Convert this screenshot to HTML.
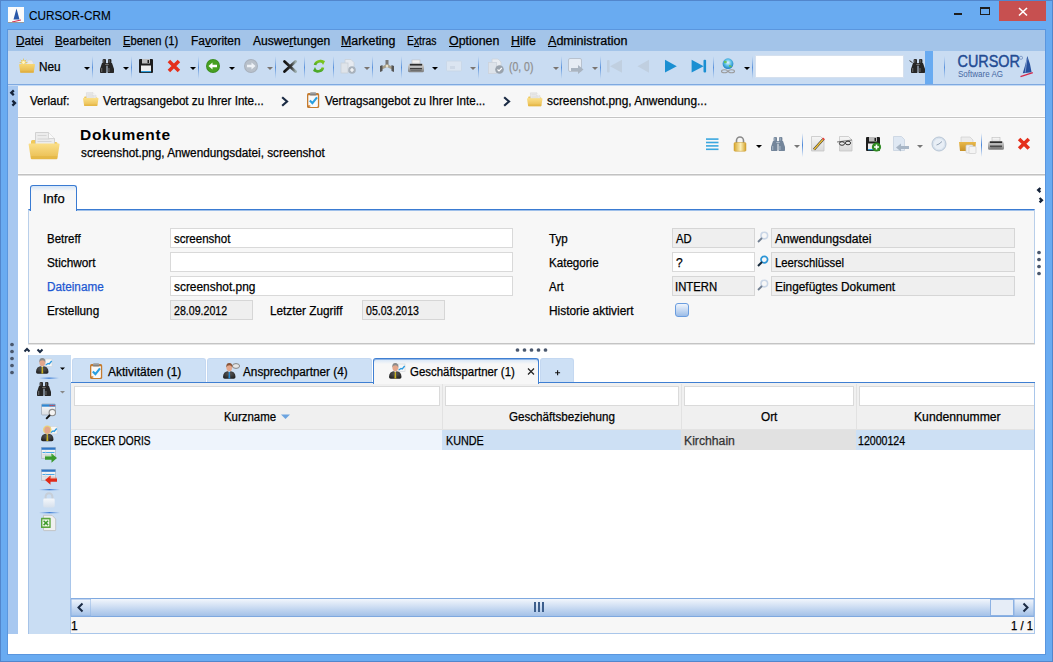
<!DOCTYPE html>
<html><head><meta charset="utf-8">
<style>
*{margin:0;padding:0;box-sizing:border-box}
html,body{width:1053px;height:662px;overflow:hidden}
body{position:relative;background:#69abf1;font-family:"Liberation Sans",sans-serif;font-size:12px;color:#000}
.a{position:absolute}
.t{position:absolute;font-size:12px;line-height:14px;white-space:nowrap;color:#000;-webkit-text-stroke:0.25px currentColor}
.u{text-decoration:underline;text-underline-offset:1px}
.sep{position:absolute;width:1px;background:linear-gradient(#cadcf2,#7ea6d8 30%,#7ea6d8 70%,#cadcf2)}
.dd{position:absolute;width:0;height:0;border-left:3px solid transparent;border-right:3px solid transparent;border-top:3px solid #000}
.ddg{border-top-color:#777}
.fld{position:absolute;height:20px;background:#fff;border:1px solid #d9d9d9}
.fldd{position:absolute;height:20px;background:#efefef;border:1px solid #d6d6d6}
.tab{position:absolute;top:358px;height:24px;background:#cde0f5;border:1px solid #c4d8f1;border-bottom:none;border-radius:3px 3px 0 0}
.flt{position:absolute;top:386px;height:20px;background:#fff;border:1px solid #dadada}
</style></head><body>
<!-- outer dark edge -->
<div class="a" style="left:0;top:0;width:1053px;height:662px;border:1px solid #5286cc"></div>

<!-- title bar -->
<div class="a" style="left:8px;top:7px;width:16px;height:16px;background:#fff"></div>
<div class="t" style="left:29.2px;top:8px;font-size:13px;line-height:16px;color:#000;-webkit-text-stroke:0.1px #000;transform:scaleX(0.9056);transform-origin:0 0">CURSOR-CRM</div>
<div class="a" style="left:999px;top:1px;width:47px;height:20px;background:#c75050"></div>

<!-- client area -->
<div class="a" style="left:7px;top:29px;width:1039px;height:626px;background:#fff;border:1px solid #5a96de"></div>
<!-- menu bar -->
<div class="a" style="left:8px;top:30px;width:1037px;height:21px;background:#a3c4e9"></div>
<div class="t" style="left:15.9px;top:34px;transform:scaleX(0.9800);transform-origin:0 0"><span class="u">D</span>atei</div>
<div class="t" style="left:55.3px;top:34px;transform:scaleX(0.9622);transform-origin:0 0"><span class="u">B</span>earbeiten</div>
<div class="t" style="left:123.1px;top:34px;transform:scaleX(0.9297);transform-origin:0 0"><span class="u">E</span>benen (1)</div>
<div class="t" style="left:191.0px;top:34px;transform:scaleX(0.9909);transform-origin:0 0">Fa<span class="u">v</span>oriten</div>
<div class="t" style="left:252.5px;top:34px;transform:scaleX(1.0073);transform-origin:0 0">Auswe<span class="u">r</span>tungen</div>
<div class="t" style="left:341.0px;top:34px;transform:scaleX(1.0324);transform-origin:0 0"><span class="u">M</span>arketing</div>
<div class="t" style="left:407.3px;top:34px;transform:scaleX(0.8616);transform-origin:0 0">E<span class="u">x</span>tras</div>
<div class="t" style="left:449.2px;top:34px;transform:scaleX(1.0327);transform-origin:0 0"><span class="u">O</span>ptionen</div>
<div class="t" style="left:511.4px;top:34px;transform:scaleX(1.0357);transform-origin:0 0"><span class="u">H</span>ilfe</div>
<div class="t" style="left:547.7px;top:34px;transform:scaleX(1.0457);transform-origin:0 0"><span class="u">A</span>dministration</div>

<!-- toolbar -->
<div class="a" style="left:8px;top:51px;width:1037px;height:34px;background:#c9dcf2;border-bottom:1px solid #7fa9e0"></div>
<div class="t" style="left:39.4px;top:60px;transform:scaleX(0.9841);transform-origin:0 0">Neu</div>
<div class="t" style="left:508.6px;top:60px;color:#8f8f8f;transform:scaleX(0.8711);transform-origin:0 0">(0, 0)</div>
<div class="a" style="left:755px;top:55px;width:149px;height:23px;background:#fff;border:1px solid #d5e0ee"></div>
<div class="a" style="left:925px;top:51px;width:8px;height:33px;background:#69abf1"></div>

<!-- breadcrumb -->
<div class="a" style="left:8px;top:85px;width:10px;height:549px;background:#a8c8f0"></div>
<div class="a" style="left:18px;top:86px;width:1027px;height:32px;background:#f7f7f7;border-bottom:1px solid #c4c4c4;box-shadow:inset 0 -1px 0 #fdfdfd"></div>
<div class="a" style="left:8px;top:85px;width:1037px;height:1px;background:#c4daf4"></div>
<div class="t" style="left:30.3px;top:94px;transform:scaleX(0.9688);transform-origin:0 0">Verlauf:</div>
<div class="t" style="left:103.0px;top:94px;transform:scaleX(0.9721);transform-origin:0 0">Vertragsangebot zu Ihrer Inte...</div>
<div class="t" style="left:325.0px;top:94px;transform:scaleX(0.9691);transform-origin:0 0">Vertragsangebot zu Ihrer Inte...</div>
<div class="t" style="left:547.2px;top:94px;transform:scaleX(0.9909);transform-origin:0 0">screenshot.png, Anwendung...</div>

<!-- header -->
<div class="a" style="left:18px;top:118px;width:1027px;height:57px;background:#f7f7f7;border-bottom:1px solid #c2c2c2;box-shadow:inset 0 1px 0 #fcfcfc,inset 0 -1px 0 #fcfcfc,0 1px 0 #dedede"></div>
<div class="t" style="left:80px;top:126.5px;font-size:15.5px;line-height:16px;font-weight:bold;letter-spacing:0.7px;-webkit-text-stroke:0">Dokumente</div>
<div class="t" style="left:80.5px;top:146px;transform:scaleX(0.9794);transform-origin:0 0">screenshot.png, Anwendungsdatei, screenshot</div>

<!-- info panel -->
<div class="a" style="left:28px;top:209px;width:1007px;height:135px;background:#f7f7f7;border:1px solid #b9cfea;border-top:1px solid #3a7bd2;border-bottom:1px solid #c4c4c4;box-shadow:inset 0 1px 0 #9fc0ea,0 1px 0 #e4e4e4"></div>
<div class="a" style="left:30px;top:185px;width:47px;height:26px;background:linear-gradient(#d3e4f7,#f7f7f7 5px);border:1px solid #3a7bd2;border-bottom:none;border-radius:3px 3px 0 0"></div>
<div class="t" style="left:42.8px;top:192px;transform:scaleX(1.0806);transform-origin:0 0">Info</div>

<div class="t" style="left:47.3px;top:232px;transform:scaleX(0.9553);transform-origin:0 0">Betreff</div>
<div class="t" style="left:47.3px;top:256px;transform:scaleX(0.9837);transform-origin:0 0">Stichwort</div>
<div class="t" style="left:47.3px;top:280px;color:#1d58d2;transform:scaleX(0.9767);transform-origin:0 0">Dateiname</div>
<div class="t" style="left:47.3px;top:304px;transform:scaleX(0.9775);transform-origin:0 0">Erstellung</div>
<div class="fld" style="left:170px;top:228px;width:343px"></div>
<div class="fld" style="left:170px;top:252px;width:343px"></div>
<div class="fld" style="left:170px;top:276px;width:343px"></div>
<div class="fldd" style="left:170px;top:300px;width:83px"></div>
<div class="t" style="left:174.0px;top:232px;transform:scaleX(0.9602);transform-origin:0 0">screenshot</div>
<div class="t" style="left:174.0px;top:280px;transform:scaleX(0.9916);transform-origin:0 0">screenshot.png</div>
<div class="t" style="left:174.0px;top:304px;transform:scaleX(0.8843);transform-origin:0 0">28.09.2012</div>
<div class="t" style="left:269.5px;top:304px;transform:scaleX(0.9815);transform-origin:0 0">Letzter Zugriff</div>
<div class="fldd" style="left:362px;top:300px;width:83px"></div>
<div class="t" style="left:366.0px;top:304px;transform:scaleX(0.8810);transform-origin:0 0">05.03.2013</div>

<div class="t" style="left:549.4px;top:232px;transform:scaleX(0.9660);transform-origin:0 0">Typ</div>
<div class="t" style="left:549.4px;top:256px;transform:scaleX(0.9653);transform-origin:0 0">Kategorie</div>
<div class="t" style="left:549.4px;top:280px;transform:scaleX(0.9563);transform-origin:0 0">Art</div>
<div class="t" style="left:549.4px;top:304px;transform:scaleX(0.9905);transform-origin:0 0">Historie aktiviert</div>
<div class="fldd" style="left:672px;top:228px;width:83px"></div>
<div class="fld" style="left:672px;top:252px;width:83px"></div>
<div class="fldd" style="left:672px;top:276px;width:83px"></div>
<div class="fldd" style="left:771px;top:228px;width:244px"></div>
<div class="fldd" style="left:771px;top:252px;width:244px"></div>
<div class="fldd" style="left:771px;top:276px;width:244px"></div>
<div class="t" style="left:676.0px;top:232px;transform:scaleX(0.9351);transform-origin:0 0">AD</div>
<div class="t" style="left:676px;top:256px">?</div>
<div class="t" style="left:675.0px;top:280px;transform:scaleX(0.9419);transform-origin:0 0">INTERN</div>
<div class="t" style="left:775.1px;top:232px;transform:scaleX(1.0101);transform-origin:0 0">Anwendungsdatei</div>
<div class="t" style="left:775.1px;top:256px;transform:scaleX(0.9408);transform-origin:0 0">Leerschlüssel</div>
<div class="t" style="left:775.1px;top:280px;transform:scaleX(0.9896);transform-origin:0 0">Eingefügtes Dokument</div>
<div class="a" style="left:675px;top:303px;width:14px;height:14px;border:1px solid #6a9ddf;border-radius:3px;background:linear-gradient(#f0f5fc,#9cbde8)"></div>

<!-- sidebar -->
<div class="a" style="left:28px;top:355px;width:43px;height:279px;background:#c9ddf3;border-left:1px solid #a6c3e8"></div>

<!-- tabs -->
<div class="tab" style="left:72px;width:134px"></div>
<div class="tab" style="left:207px;width:165px"></div>
<div class="a" style="left:373px;top:358px;width:166px;height:26px;background:linear-gradient(#d3e4f7,#f7f7f7 5px);border:1px solid #3f7fd2;border-bottom:none;border-radius:3px 3px 0 0;z-index:2;box-shadow:inset 0 1px 0 #8fb5e6"></div>
<div class="tab" style="left:540px;width:34px"></div>
<div class="a" style="left:71px;top:382px;width:303px;height:1px;background:#3f7fd2"></div>
<div class="a" style="left:538px;top:382px;width:497px;height:1px;background:#3f7fd2"></div>
<div class="t" style="left:108px;top:365px">Aktivitäten (1)</div>
<div class="t" style="left:242.7px;top:365px;transform:scaleX(0.9811);transform-origin:0 0">Ansprechpartner (4)</div>
<div class="t" style="left:409.7px;top:365px;z-index:3;transform:scaleX(0.9523);transform-origin:0 0">Geschäftspartner (1)</div>



<!-- grid -->
<div class="a" style="left:70px;top:383px;width:965px;height:251px;background:#fff;border-left:1px solid #a9c6ea;border-right:1px solid #a9c6ea;border-bottom:1px solid #a9c6ea"></div>
<div class="a" style="left:71px;top:383px;width:963px;height:47px;background:#f0f0f0;border-bottom:1px solid #e3e3e3"></div>
<div class="flt" style="left:74px;width:366px"></div>
<div class="flt" style="left:445px;width:234px"></div>
<div class="flt" style="left:684px;width:170px"></div>
<div class="flt" style="left:859px;width:175px;border-right:none"></div>
<div class="a" style="left:442px;top:384px;width:1px;height:45px;background:#e2e2e2"></div>
<div class="a" style="left:681px;top:384px;width:1px;height:45px;background:#e2e2e2"></div>
<div class="a" style="left:856px;top:384px;width:1px;height:45px;background:#e2e2e2"></div>
<div class="t" style="left:224.1px;top:410px;transform:scaleX(0.9524);transform-origin:0 0">Kurzname</div>
<div class="t" style="left:509.3px;top:410px;transform:scaleX(0.9684);transform-origin:0 0">Geschäftsbeziehung</div>
<div class="t" style="left:761.3px;top:410px;transform:scaleX(0.9810);transform-origin:0 0">Ort</div>
<div class="t" style="left:914.3px;top:410px;transform:scaleX(1.0142);transform-origin:0 0">Kundennummer</div>

<div class="a" style="left:71px;top:430px;width:371px;height:20px;background:#eef4fc"></div>
<div class="a" style="left:442px;top:430px;width:239px;height:20px;background:#cde0f4"></div>
<div class="a" style="left:681px;top:430px;width:175px;height:20px;background:#e1e1e1"></div>
<div class="a" style="left:856px;top:430px;width:178px;height:20px;background:#cde0f4"></div>
<div class="t" style="left:74.1px;top:434px;transform:scaleX(0.8447);transform-origin:0 0">BECKER DORIS</div>
<div class="t" style="left:445.5px;top:434px;transform:scaleX(0.9000);transform-origin:0 0">KUNDE</div>
<div class="t" style="left:683.8px;top:434px;color:#333;transform:scaleX(1.0172);transform-origin:0 0">Kirchhain</div>
<div class="t" style="left:858.4px;top:434px;transform:scaleX(0.8824);transform-origin:0 0">12000124</div>

<!-- scrollbar -->
<div class="a" style="left:71px;top:598px;width:963px;height:19px;background:linear-gradient(#eef3fb,#a7c4e9);border-top:1px solid #7ea8df;border-bottom:1px solid #7ea8df"></div>
<!-- status -->
<div class="a" style="left:71px;top:617px;width:963px;height:17px;background:#f7f7f7;border-bottom:1px solid #a9c6ea"></div>
<div class="t" style="left:71px;top:619px">1</div>
<div class="t" style="left:1010.8px;top:619px;transform:scaleX(0.9377);transform-origin:0 0">1 / 1</div>
<svg class="a" style="left:0;top:0;z-index:20" width="1053" height="662" viewBox="0 0 1053 662">
<defs>
<linearGradient id="gFold" x1="0" y1="0" x2="0" y2="1"><stop offset="0" stop-color="#f7d774"/><stop offset="1" stop-color="#e5b647"/></linearGradient>
<linearGradient id="gSep" x1="0" y1="0" x2="0" y2="1"><stop offset="0" stop-color="#7aa8e0" stop-opacity="0"/><stop offset=".5" stop-color="#5b92dc"/><stop offset="1" stop-color="#7aa8e0" stop-opacity="0"/></linearGradient>
<linearGradient id="gSepH" x1="0" y1="0" x2="1" y2="0"><stop offset="0" stop-color="#5b92dc" stop-opacity="0"/><stop offset=".5" stop-color="#4a86d8"/><stop offset="1" stop-color="#5b92dc" stop-opacity="0"/></linearGradient>
<linearGradient id="gGold" x1="0" y1="0" x2="1" y2="0"><stop offset="0" stop-color="#d9a830"/><stop offset=".5" stop-color="#fbeeb0"/><stop offset="1" stop-color="#d4a42c"/></linearGradient>
<linearGradient id="gPaper" x1="0" y1="0" x2="0" y2="1"><stop offset="0" stop-color="#f4f4f4"/><stop offset="1" stop-color="#d6d6d6"/></linearGradient>
<linearGradient id="gX" x1="0" y1="0" x2="1" y2="0"><stop offset="0" stop-color="#111"/><stop offset=".6" stop-color="#333"/><stop offset="1" stop-color="#9aa"/></linearGradient>
<linearGradient id="gRef" x1="0" y1="0" x2="0" y2="1"><stop offset="0" stop-color="#7ac41e"/><stop offset="1" stop-color="#4aa82a"/></linearGradient>
<radialGradient id="gGlobe" cx=".5" cy=".4" r=".6"><stop offset="0" stop-color="#eaf6ff"/><stop offset=".5" stop-color="#5cc0e8"/><stop offset="1" stop-color="#1b7cc0"/></radialGradient>
<linearGradient id="gPrn" x1="0" y1="0" x2="0" y2="1"><stop offset="0" stop-color="#e2e2e2"/><stop offset="1" stop-color="#7a7a7a"/></linearGradient>
<linearGradient id="gPapr1" x1="0" y1="0" x2="0" y2="1"><stop offset="0" stop-color="#fafafa"/><stop offset="1" stop-color="#d8d8d8"/></linearGradient>
</defs>

<!-- ===== Title icon ===== -->
<rect x="8" y="7" width="16" height="16" fill="#fbfbfb"/>
<path d="M16.5 8.5 L19.5 19.5 L13.5 19.5 Z" fill="#2a58a8"/>
<path d="M12 21.5 L21 19.5 L21 20.5 L12 22.5Z" fill="#d63050"/>

<rect x="8" y="22" width="16" height="1" fill="#9a9a9a"/>
<rect x="954" y="13" width="8" height="2" fill="#1e1e1e"/>
<rect x="980.5" y="7.5" width="9" height="7" fill="none" stroke="#1e1e1e" stroke-width="1"/><rect x="980" y="7" width="10" height="2" fill="#1e1e1e"/>
<path d="M1019 8 L1027 15.5 M1027 8 L1019 15.5" stroke="#fff" stroke-width="1.6"/>
<!-- ===== Toolbar separators ===== -->
<g fill="url(#gSep)">
<rect x="92" y="56" width="1" height="23"/><rect x="131" y="56" width="1" height="23"/><rect x="198" y="56" width="1" height="23"/>
<rect x="275" y="56" width="1" height="23"/><rect x="304" y="56" width="1" height="23"/><rect x="333" y="56" width="1" height="23"/>
<rect x="372" y="56" width="1" height="23"/><rect x="401" y="56" width="1" height="23"/><rect x="478" y="56" width="1" height="23"/>
<rect x="561" y="56" width="1" height="23"/><rect x="600" y="56" width="1" height="23"/><rect x="713" y="56" width="1" height="23"/>
<rect x="752" y="56" width="1" height="23"/><rect x="944" y="56" width="1" height="23"/>
</g>
<!-- dropdown arrows -->
<g fill="#000">
<path d="M84 67h6l-3 3z"/><path d="M123 67h6l-3 3z"/><path d="M190 67h6l-3 3z"/><path d="M229 67h6l-3 3z"/>
<path d="M432 67h6l-3 3z"/><path d="M744 67h6l-3 3z"/>
</g>
<g fill="#7a7470">
<path d="M267 67h6l-3 3z"/><path d="M364 67h6l-3 3z"/><path d="M470 67h6l-3 3z"/><path d="M553 67h6l-3 3z"/><path d="M592 67h6l-3 3z"/>
</g>

<!-- Neu: folder with sun -->
<g>
<path d="M26.5 65 q0 -5 3.5 -5 q3.5 0 3.5 5z" fill="#e9e9e9" stroke="#d0d0d0" stroke-width=".5"/>
<g stroke="#e0c257" stroke-width=".9" opacity=".9"><path d="M23.5 58.6v7.8M19.6 62.5h7.8M20.8 59.8l5.4 5.4M26.2 59.8l-5.4 5.4"/></g>
<circle cx="23.5" cy="62.5" r="2.4" fill="#f2d36c"/>
<circle cx="23.5" cy="62.5" r="1.4" fill="#fff6c8"/>
<path d="M19 64.4 q0 -.5 .5 -.5 h15 q.5 0 .5 .5 l-1.2 7.9 q-.1 .5 -.6 .5 h-12.4 q-.5 0 -.6 -.5z" fill="url(#gFold)"/>
<path d="M20.3 70.8 h13.4 l-.2 1.5 q-.1 .5 -.6 .5 h-11.8 q-.5 0 -.6 -.5z" fill="#dcaa3a" opacity=".55"/>
</g>

<!-- binoculars -->
<g transform="translate(100,59)">
<rect x="2.6" y="0" width="3.4" height="4.5" rx="1" fill="#262626"/><rect x="8" y="0" width="3.4" height="4.5" rx="1" fill="#262626"/>
<rect x="3.2" y=".6" width="1.2" height="3" fill="#8a8a8a" opacity=".6"/><rect x="8.6" y=".6" width="1.2" height="3" fill="#8a8a8a" opacity=".6"/>
<rect x="4.5" y="4" width="5" height="3" fill="#5c5c5c"/>
<path d="M2 4 h4.5 v9.3 q0 .7 -.7 .7 h-5.1 q-.7 0 -.7 -.7 v-3.3 z" fill="#262626"/>
<path d="M12 4 h-4.5 v9.3 q0 .7 .7 .7 h5.1 q.7 0 .7 -.7 v-3.3 z" fill="#262626"/>
<rect x="1" y="9" width="1.3" height="4" fill="#8a8a8a" opacity=".55"/><rect x="8.3" y="9" width="1.3" height="4" fill="#8a8a8a" opacity=".55"/>
<rect x="5.2" y="5" width="3.6" height="1" fill="#8a8a8a" opacity=".7"/>
</g>

<!-- floppy -->
<g>
<rect x="139" y="59" width="14" height="14" rx="1" fill="#1e1e1e"/>
<rect x="142" y="59" width="8" height="4.5" fill="#bdbdbd"/>
<rect x="147.5" y="60" width="1.5" height="3" fill="#1e1e1e"/>
<rect x="141" y="65.5" width="10" height="6.5" fill="#eeeeee"/>
<rect x="141" y="71" width="10" height="1.2" fill="#2a9ad8"/>
</g>

<!-- red X -->
<path d="M168.9 61.1 L178.9 71.1 M178.9 61.1 L168.9 71.1" stroke="#e4301c" stroke-width="3.5"/>

<!-- green back -->
<circle cx="213" cy="66" r="7" fill="#3b8e1f"/>
<circle cx="213" cy="66" r="6" fill="#47a022"/>
<path d="M208.5 66 l4-3.5 v2.2 h4.5 v2.6 h-4.5 v2.2z" fill="#fff"/>
<!-- gray fwd -->
<circle cx="251" cy="66" r="7" fill="#a7b0bc"/>
<circle cx="251" cy="66" r="6" fill="#b8c0ca"/>
<path d="M255.5 66 l-4-3.5 v2.2 h-4.5 v2.6 h4.5 v2.2z" fill="#eef2f7"/>

<!-- black X -->
<path d="M284.5 61.5 L295.5 71.5 M295.5 61.5 L284.5 71.5" stroke="url(#gX)" stroke-width="2.8" stroke-linecap="round"/>

<!-- refresh -->
<g fill="none" stroke="url(#gRef)" stroke-width="2.6">
<path d="M315 65 a5 4.5 0 0 1 8.5 -2.5"/><path d="M323 67.5 a5 4.5 0 0 1 -8.5 2.5"/>
</g>
<path d="M320.5 59.5 l4.5 1.5 l-2 4z" fill="#7ac41e"/><path d="M317.5 72.5 l-4.5 -1.5 l2 -4z" fill="#4aa82a"/>

<!-- doc+ gray -->
<g>
<path d="M345 59.5 h6 l3 3 v9 h-9z" fill="#e6eaf0" stroke="#c9d0d8" stroke-width=".8"/>
<rect x="341" y="63" width="7" height="10" fill="#dfe4ea" stroke="#c9d0d8" stroke-width=".8"/>
<circle cx="352" cy="70" r="3.8" fill="#a9b2bc"/>
<path d="M352 68v4M350 70h4" stroke="#fff" stroke-width="1.2"/>
</g>

<!-- network -->
<g>
<rect x="385.5" y="60" width="3" height="5" fill="#777"/>
<path d="M381 67 l6-3 l6 3 v3 l-6-3 l-6 3z" fill="#a8a08c"/>
<path d="M380 66 l2.5 -1 v6 l-2.5 1z M394 66 l-2.5 -1 v6 l2.5 1z" fill="#555"/>
<circle cx="387" cy="66" r="1.3" fill="#e8e0c8"/>
</g>

<!-- printer -->
<g transform="translate(408,59.5)">
<rect x="4" y=".5" width="8" height="5" fill="url(#gPapr1)" stroke="#bdbdbd" stroke-width=".6"/>
<path d="M0 6.5 q0 -2.3 2.3 -2.3 h11.4 q2.3 0 2.3 2.3 v4.7 q0 1.6 -1.6 1.6 h-12.8 q-1.6 0 -1.6 -1.6z" fill="url(#gPrn)"/>
<rect x="1.8" y="4.3" width="12.4" height="1.8" fill="#2c2c2c"/>
<rect x="2" y="8.6" width="12" height="1.2" fill="#333"/>
<rect x="2.5" y="10.5" width="11" height=".8" fill="#666"/>
</g>

<!-- mail disabled -->
<rect x="446.5" y="61" width="15" height="10" rx="1" fill="#dbe5f1" stroke="#c8d5e6" stroke-width=".8"/>
<rect x="450" y="66" width="5" height="3" fill="#cdd8e6"/>

<!-- docs check -->
<g>
<path d="M492 59 h6 l3 3 v9 h-9z" fill="#e8ecf1" stroke="#cdd3db" stroke-width=".8"/>
<rect x="488.5" y="62.5" width="8" height="11" fill="#dde3ea" stroke="#cdd3db" stroke-width=".8"/>
<circle cx="499.5" cy="69.5" r="4.3" fill="#9aa3ad"/>
<path d="M497.5 69.5 l1.5 1.5 l2.8-3" stroke="#fff" stroke-width="1.1" fill="none"/>
</g>
<!-- export -->
<g>
<rect x="568.5" y="58.5" width="13" height="13" rx="1.5" fill="#e6ecf4" stroke="#b8c2cf" stroke-width="1"/>
<path d="M571 68 h7 v-3 l5.5 4.5 l-5.5 4.5 v-3 h-7z" fill="#a9b4c1"/>
</g>
<!-- first / prev disabled -->
<g fill="#c0cfe0">
<rect x="607" y="60" width="2.6" height="12.5" rx="1"/><path d="M610 66.2 L622 59.7 V72.7z"/>
<path d="M637.5 66.2 L649 59.7 V72.7z"/>
</g>
<!-- play / last -->
<g fill="#1a8fd2">
<path d="M665 59.8 L676.8 66.2 L665 72.6z"/>
<path d="M691.6 59.8 L703.6 66.2 L691.6 72.6z"/><rect x="703.5" y="59.7" width="2.6" height="12.9" rx="1"/>
</g>
<!-- globe -->
<g>
<circle cx="728" cy="63.7" r="5.4" fill="url(#gGlobe)"/>
<path d="M724 61 q2 -1 3 1 q-1 2 -3 1z M729 65 q2 0 3 1.5 q-1 1.5 -3 0z" fill="#6cc23a" opacity=".8"/>
<g fill="none" stroke="#9a9a9a" stroke-width="1.1"><ellipse cx="724.5" cy="71.3" rx="3" ry="1.5"/><ellipse cx="731.5" cy="71.3" rx="3" ry="1.5"/></g>
</g>
<!-- search binoculars -->
<g transform="translate(911,59)">
<rect x="2.6" y="0" width="3.4" height="4.5" rx="1" fill="#262626"/><rect x="8" y="0" width="3.4" height="4.5" rx="1" fill="#262626"/>
<rect x="3.2" y=".6" width="1.2" height="3" fill="#8a8a8a" opacity=".6"/><rect x="8.6" y=".6" width="1.2" height="3" fill="#8a8a8a" opacity=".6"/>
<rect x="4.5" y="4" width="5" height="3" fill="#5c5c5c"/>
<path d="M2 4 h4.5 v9.3 q0 .7 -.7 .7 h-5.1 q-.7 0 -.7 -.7 v-3.3 z" fill="#262626"/>
<path d="M12 4 h-4.5 v9.3 q0 .7 .7 .7 h5.1 q.7 0 .7 -.7 v-3.3 z" fill="#262626"/>
<rect x="1" y="9" width="1.3" height="4" fill="#8a8a8a" opacity=".55"/><rect x="8.3" y="9" width="1.3" height="4" fill="#8a8a8a" opacity=".55"/>
<rect x="5.2" y="5" width="3.6" height="1" fill="#8a8a8a" opacity=".7"/>
</g><path d="M909.5 60 l3 2.2 v1 l-3 -2.2z" fill="#333"/>
<!-- CURSOR logo -->
<text x="957.5" y="66.7" font-family="Liberation Sans" font-size="16.6" fill="#234b93" stroke="#234b93" stroke-width=".45" textLength="62.5" lengthAdjust="spacingAndGlyphs">CURSOR</text>
<circle cx="1021" cy="57.8" r="1.6" fill="none" stroke="#5a78b0" stroke-width=".6"/>
<text x="958" y="76.7" font-family="Liberation Sans" font-size="8.6" fill="#4668a2" textLength="45" lengthAdjust="spacingAndGlyphs">Software AG</text>
<path d="M1027.3 56 Q1025.5 65 1022.8 73.2 L1031.6 72.2 Q1030.2 63 1027.3 56Z" fill="#27509c"/>
<path d="M1027 58.5 Q1026 66 1025.2 72.6" stroke="#9db4dc" stroke-width=".7" fill="none"/>
<path d="M1020.5 76.6 L1032.8 72.6" stroke="#d42a4c" stroke-width="1.5"/>
</svg>
<svg class="a" style="left:0;top:0;z-index:20" width="1053" height="662" viewBox="0 0 1053 662">
<defs>
<linearGradient id="gFold2" x1="0" y1="0" x2="0" y2="1"><stop offset="0" stop-color="#fbe08a"/><stop offset="1" stop-color="#e9bc4e"/></linearGradient>
<linearGradient id="gFold3" x1="0" y1="0" x2="0" y2="1"><stop offset="0" stop-color="#e9b94a"/><stop offset="1" stop-color="#c8922a"/></linearGradient>
<linearGradient id="gSepB" x1="0" y1="0" x2="0" y2="1"><stop offset="0" stop-color="#5b92dc" stop-opacity="0"/><stop offset=".5" stop-color="#4a86d8"/><stop offset="1" stop-color="#5b92dc" stop-opacity="0"/></linearGradient>
<linearGradient id="gLock" x1="0" y1="0" x2="1" y2="0"><stop offset="0" stop-color="#d6a52c"/><stop offset=".55" stop-color="#fcf0b8"/><stop offset="1" stop-color="#d2a02a"/></linearGradient>
<linearGradient id="gPap" x1="0" y1="0" x2="0" y2="1"><stop offset="0" stop-color="#f6f6f6"/><stop offset="1" stop-color="#d9d9d9"/></linearGradient>
<linearGradient id="gPrn2" x1="0" y1="0" x2="0" y2="1"><stop offset="0" stop-color="#e2e2e2"/><stop offset="1" stop-color="#7a7a7a"/></linearGradient>
<linearGradient id="gPapr" x1="0" y1="0" x2="0" y2="1"><stop offset="0" stop-color="#fafafa"/><stop offset="1" stop-color="#d8d8d8"/></linearGradient>
</defs>
<!-- breadcrumb left chevrons -->
<g fill="none" stroke="#14233a" stroke-width="2.3">
<path d="M13.8 90.4 l-2.5 2.4 l2.5 2.4"/><path d="M12.4 100.6 l2.6 2.5 l-2.6 2.5"/>
</g>
<!-- breadcrumb folder 1 -->
<g transform="translate(68.70,26.40) scale(.5)">
<path d="M31 141.5 q0 -1.5 1.5 -1.5 h8.5 l2 2 h13 q1.5 0 1.5 1.5 v2 h-26.5z" fill="#f0c95a"/>
<path d="M35.5 132.5 h13 l6 6 v6 h-19z" fill="#ececec" stroke="#c9c9c9" stroke-width=".8"/>
<path d="M48.5 132.5 v6 h6" fill="#fafafa" stroke="#c9c9c9" stroke-width=".7"/>
<path d="M37.5 135.5h9M37.5 139h12M37.5 141.5h14" stroke="#cfcfcf" stroke-width=".8"/>
<path d="M28.6 144.2 q0 -.8 .8 -.8 h29.4 q.8 0 .8 .8 l-2.2 14.2 q-.1 .8 -.9 .8 h-24.8 q-.8 0 -.9 -.8z" fill="url(#gFold2)"/>
<path d="M30.8 156 h26.6 l-.3 2.3 q-.1 .8 -.9 .8 h-24.2 q-.8 0 -.9 -.8z" fill="#e2b440" opacity=".6"/>
</g>
<!-- chevrons -->
<g fill="none" stroke="#1b2b44" stroke-width="2.2" stroke-linecap="square">
<path d="M283 98 l4 3.5 l-4 3.5"/><path d="M505 98 l4 3.5 l-4 3.5"/>
</g>
<!-- clipboard bc -->
<g transform="translate(307,92.3)">
<rect x="0" y=".8" width="12.2" height="15" rx="1.6" fill="#c47b2f"/>
<path d="M1.3 3 h9.6 v10.8 q0 .8 -.8 .8 h-6.8 l-2 -2z" fill="#f9f9f9"/>
<path d="M1.3 12.6 l2 2 v-2z" fill="#e0a060"/>
<rect x="3" y="0" width="6.2" height="3" rx="1" fill="#9c9c9c"/><rect x="3" y="2" width="6.2" height="1" fill="#7a7a7a"/>
<path d="M2.8 8.2 l2.6 2.6 l4.6 -5.8" fill="none" stroke="#2a9fe0" stroke-width="2.1"/>
</g>
<!-- folder 3 -->
<g transform="translate(512.70,26.60) scale(.5)">
<path d="M31 141.5 q0 -1.5 1.5 -1.5 h8.5 l2 2 h13 q1.5 0 1.5 1.5 v2 h-26.5z" fill="#f0c95a"/>
<path d="M35.5 132.5 h13 l6 6 v6 h-19z" fill="#ececec" stroke="#c9c9c9" stroke-width=".8"/>
<path d="M48.5 132.5 v6 h6" fill="#fafafa" stroke="#c9c9c9" stroke-width=".7"/>
<path d="M37.5 135.5h9M37.5 139h12M37.5 141.5h14" stroke="#cfcfcf" stroke-width=".8"/>
<path d="M28.6 144.2 q0 -.8 .8 -.8 h29.4 q.8 0 .8 .8 l-2.2 14.2 q-.1 .8 -.9 .8 h-24.8 q-.8 0 -.9 -.8z" fill="url(#gFold2)"/>
<path d="M30.8 156 h26.6 l-.3 2.3 q-.1 .8 -.9 .8 h-24.2 q-.8 0 -.9 -.8z" fill="#e2b440" opacity=".6"/>
</g>

<!-- header folder big -->
<g>
<path d="M31 141.5 q0 -1.5 1.5 -1.5 h8.5 l2 2 h13 q1.5 0 1.5 1.5 v2 h-26.5z" fill="#f0c95a"/>
<path d="M35.5 132.5 h13 l6 6 v6 h-19z" fill="#ececec" stroke="#c9c9c9" stroke-width=".8"/>
<path d="M48.5 132.5 v6 h6" fill="#fafafa" stroke="#c9c9c9" stroke-width=".7"/>
<path d="M37.5 135.5h9M37.5 139h12M37.5 141.5h14" stroke="#cfcfcf" stroke-width=".8"/>
<path d="M28.6 144.2 q0 -.8 .8 -.8 h29.4 q.8 0 .8 .8 l-2.2 14.2 q-.1 .8 -.9 .8 h-24.8 q-.8 0 -.9 -.8z" fill="url(#gFold2)"/>
<path d="M30.8 156 h26.6 l-.3 2.3 q-.1 .8 -.9 .8 h-24.2 q-.8 0 -.9 -.8z" fill="#e2b440" opacity=".6"/>
</g>

<!-- header icons -->
<g fill="#3aa7df"><rect x="706" y="138.3" width="12.5" height="1.6"/><rect x="706" y="141.7" width="12.5" height="1.6"/><rect x="706" y="145.1" width="12.5" height="1.6"/><rect x="706" y="148.5" width="12.5" height="1.6"/></g>
<g>
<path d="M736.5 143 v-2.5 a3.5 3.5 0 0 1 7 0 v2.5" fill="none" stroke="#8a8a8a" stroke-width="1.6"/>
<rect x="734" y="142.5" width="12" height="8.8" rx="1.2" fill="url(#gLock)" stroke="#c9982a" stroke-width=".5"/>
</g>
<path d="M756 145h6l-3 3z" fill="#000"/>
<g transform="translate(771,137)">
<rect x="2.6" y="0" width="3.4" height="4.5" rx="1" fill="#73859a"/><rect x="8" y="0" width="3.4" height="4.5" rx="1" fill="#73859a"/>
<rect x="3.2" y=".6" width="1.2" height="3" fill="#c0ccd8" opacity=".6"/><rect x="8.6" y=".6" width="1.2" height="3" fill="#c0ccd8" opacity=".6"/>
<rect x="4.5" y="4" width="5" height="3" fill="#95a3b3"/>
<path d="M2 4 h4.5 v9.3 q0 .7 -.7 .7 h-5.1 q-.7 0 -.7 -.7 v-3.3 z" fill="#73859a"/>
<path d="M12 4 h-4.5 v9.3 q0 .7 .7 .7 h5.1 q.7 0 .7 -.7 v-3.3 z" fill="#73859a"/>
<rect x="1" y="9" width="1.3" height="4" fill="#c0ccd8" opacity=".55"/><rect x="8.3" y="9" width="1.3" height="4" fill="#c0ccd8" opacity=".55"/>
<rect x="5.2" y="5" width="3.6" height="1" fill="#c0ccd8" opacity=".7"/>
</g>
<path d="M794 145h6l-3 3z" fill="#777"/>
<rect x="802" y="133" width="1" height="24" fill="url(#gSepB)"/>
<!-- edit doc -->
<g>
<path d="M811.5 136.5 h9 l3.5 3.5 v11 h-12.5z" fill="url(#gPap)" stroke="#c5c5c5" stroke-width=".8"/>
<path d="M814 149.5 l9 -10" stroke="#2a2a2a" stroke-width="2.6"/>
<path d="M814 149.5 l9 -10" stroke="#f2c33a" stroke-width="1.4"/>
<path d="M822 138.5 l2 1.8 l1 -1 l-2 -1.8z" fill="#e03030"/>
</g>
<!-- glasses doc -->
<g>
<path d="M839.5 136.5 h9 l3.5 3.5 v11 h-12.5z" fill="url(#gPap)" stroke="#c5c5c5" stroke-width=".8"/>
<path d="M837 142 l15 -2" stroke="#555" stroke-width=".8"/>
<ellipse cx="842" cy="143.5" rx="2.6" ry="1.8" fill="none" stroke="#333" stroke-width="1"/>
<ellipse cx="848" cy="143" rx="2.6" ry="1.8" fill="none" stroke="#333" stroke-width="1"/>
</g>
<!-- save+ -->
<g>
<rect x="866" y="137" width="14" height="14" rx="1" fill="#1e1e1e"/>
<rect x="869" y="137" width="8" height="4.5" fill="#bdbdbd"/>
<rect x="874.5" y="138" width="1.5" height="3" fill="#1e1e1e"/>
<rect x="868" y="143.5" width="10" height="6.5" fill="#eeeeee"/>
<rect x="868" y="149" width="10" height="1.2" fill="#2a9ad8"/>
<circle cx="876.5" cy="147" r="4.6" fill="#2e8a22"/>
<path d="M876.5 144.5v5M874 147h5" stroke="#fff" stroke-width="1.6"/>
</g>
<!-- import disabled -->
<g>
<path d="M893.5 136.5 h8 l3 3 v11 h-11z" fill="#dfe8f3" stroke="#c6d2e0" stroke-width=".8"/>
<path d="M896 147.5 l5 -4 v2.5 h8 v3 h-8 v2.5z" fill="#a8b6c6"/>
</g>
<path d="M917 145h6l-3 3z" fill="#777"/>
<!-- clock disabled -->
<g>
<circle cx="939" cy="144" r="7" fill="#d9e3ee" stroke="#b7c5d5" stroke-width="1"/>
<circle cx="939" cy="144" r="5.2" fill="#e9eff6"/>
<path d="M939 144 l-2.5 1 M939 144 l3 -2.5" stroke="#8a9aae" stroke-width=".9"/>
</g>
<!-- folder copy -->
<g>
<path d="M961 137 h9 l3 3 v6 h-12z" fill="#ececec" stroke="#cfcfcf" stroke-width=".7"/>
<path d="M959 142 h17 l-1 9 h-15z" fill="url(#gFold3)"/>
<rect x="966" y="145" width="7" height="8" rx="1" fill="#f0f0f0" stroke="#cfcfcf" stroke-width=".7"/>
<rect x="969" y="146.5" width="7" height="7" rx="1" fill="#f4f4f4" stroke="#cfcfcf" stroke-width=".7"/>
</g>
<rect x="981" y="133" width="1" height="24" fill="url(#gSepB)"/>
<!-- printer -->
<g transform="translate(988,137)">
<rect x="4" y=".5" width="8" height="5" fill="url(#gPapr)" stroke="#bdbdbd" stroke-width=".6"/>
<path d="M0 6.5 q0 -2.3 2.3 -2.3 h11.4 q2.3 0 2.3 2.3 v4.7 q0 1.6 -1.6 1.6 h-12.8 q-1.6 0 -1.6 -1.6z" fill="url(#gPrn2)"/>
<rect x="1.8" y="4.3" width="12.4" height="1.8" fill="#2c2c2c"/>
<rect x="2" y="8.6" width="12" height="1.2" fill="#333"/>
<rect x="2.5" y="10.5" width="11" height=".8" fill="#666"/>
</g>
<!-- red X -->
<path d="M1019.1 138.9 L1028.8 148.6 M1028.8 138.9 L1019.1 148.6" stroke="#e4301c" stroke-width="3.5"/>

<!-- right-side chevrons near panel -->
<g fill="none" stroke="#14233a" stroke-width="2.3">
<path d="M1040.4 188 l-2.2 2.1 l2.2 2.1"/><path d="M1039.6 198 l2.3 2.2 l-2.3 2.2"/>
</g>
<!-- right dots -->
<g fill="#4a586e"><circle cx="1039" cy="252.5" r="1.85"/><circle cx="1039" cy="259.5" r="1.85"/><circle cx="1039" cy="266.5" r="1.85"/><circle cx="1039" cy="273.5" r="1.85"/></g>
<!-- left dots -->
<g fill="#4a586e"><circle cx="12" cy="344.5" r="1.85"/><circle cx="12" cy="351.5" r="1.85"/><circle cx="12" cy="358.5" r="1.85"/><circle cx="12" cy="365.5" r="1.85"/><circle cx="12" cy="372.5" r="1.85"/></g>
<!-- splitter dots -->
<g fill="#4a586e"><circle cx="517.5" cy="350" r="1.85"/><circle cx="524.5" cy="350" r="1.85"/><circle cx="531.5" cy="350" r="1.85"/><circle cx="538.5" cy="350" r="1.85"/><circle cx="545.5" cy="350" r="1.85"/></g>
<!-- up/down chevrons -->
<g fill="none" stroke="#1b2b44" stroke-width="2">
<path d="M24.5 351.5 l2.5 -2.5 l2.5 2.5"/><path d="M37.5 349.5 l2.5 2.5 l2.5 -2.5"/>
</g>
<!-- lookup magnifiers -->
<g>
<circle cx="764.3" cy="235.6" r="3.3" fill="none" stroke="#cad6e6" stroke-width="1.6"/><path d="M762 238 l-4 4" stroke="#6f7d90" stroke-width="1.8"/>
<circle cx="764.3" cy="259.6" r="3.3" fill="none" stroke="#2b95d6" stroke-width="1.7"/><path d="M762 262 l-4 4" stroke="#14283a" stroke-width="2"/>
<circle cx="764.3" cy="283.6" r="3.3" fill="none" stroke="#cad6e6" stroke-width="1.6"/><path d="M762 286 l-4 4" stroke="#6f7d90" stroke-width="1.8"/>
</g>
</svg>
<svg class="a" style="left:0;top:0;z-index:20" width="1053" height="662" viewBox="0 0 1053 662">
<defs>
<linearGradient id="gSepH2" x1="0" y1="0" x2="1" y2="0"><stop offset="0" stop-color="#4a86d8" stop-opacity="0"/><stop offset=".5" stop-color="#3f7fd6"/><stop offset="1" stop-color="#4a86d8" stop-opacity="0"/></linearGradient>
<linearGradient id="gSuit" x1="0" y1="0" x2="0" y2="1"><stop offset="0" stop-color="#555"/><stop offset="1" stop-color="#1c1c1c"/></linearGradient>
<linearGradient id="gSB" x1="0" y1="0" x2="0" y2="1"><stop offset="0" stop-color="#f2f6fc"/><stop offset="1" stop-color="#a3c1e8"/></linearGradient>
<linearGradient id="gWin" x1="0" y1="0" x2="0" y2="1"><stop offset="0" stop-color="#fbfbfb"/><stop offset="1" stop-color="#d9dde2"/></linearGradient>
<radialGradient id="gSuit2" cx=".5" cy=".35" r=".7"><stop offset="0" stop-color="#5a5a5a"/><stop offset="1" stop-color="#1e1e1e"/></radialGradient>
<linearGradient id="gLockD" x1="0" y1="0" x2="0" y2="1"><stop offset="0" stop-color="#f4f7fb"/><stop offset="1" stop-color="#d6e0ec"/></linearGradient>
</defs>
<!-- sidebar: person chart 1 -->
<g transform="translate(36,358)"><rect x="9.3" y="1" width="6.7" height="7.4" fill="#f7f7f7" stroke="#cfd3d8" stroke-width=".6"/><path d="M9.8 7 l2.2 -1.6 l1.2 .6 l2.5 -3" fill="none" stroke="#2a9ae0" stroke-width="1.3"/><path d="M0 14 q0 -6 6.25 -6 q6.25 0 6.25 6 q0 1.8 -1.8 1.8 h-8.9 q-1.8 0 -1.8 -1.8z" fill="url(#gSuit2)"/><path d="M5.1 8 h2.4 l-1.2 2.2z" fill="#f0f0f0"/><path d="M5.8 8.8 h1.1 l.4 6.6 h-1.9z" fill="#c8b020"/><ellipse cx="6.3" cy="4.6" rx="2.9" ry="3.7" fill="#e3a78c"/><path d="M3.3 4.4 q-.3 -4.4 3 -4.4 q3.3 0 3 4.4 q-.8 -2.1 -3 -2.1 q-2.2 0 -3 2.1z" fill="#8a8a8a"/></g>
<path d="M60 367.5h5l-2.5 2.5z" fill="#000"/>
<rect x="39" y="377.5" width="20" height="1.3" fill="url(#gSepH2)"/>
<!-- sidebar binoculars -->
<g transform="translate(37,382)">
<rect x="2.6" y="0" width="3.4" height="4.5" rx="1" fill="#262626"/><rect x="8" y="0" width="3.4" height="4.5" rx="1" fill="#262626"/>
<rect x="3.2" y=".6" width="1.2" height="3" fill="#8a8a8a" opacity=".6"/><rect x="8.6" y=".6" width="1.2" height="3" fill="#8a8a8a" opacity=".6"/>
<rect x="4.5" y="4" width="5" height="3" fill="#5c5c5c"/>
<path d="M2 4 h4.5 v9.3 q0 .7 -.7 .7 h-5.1 q-.7 0 -.7 -.7 v-3.3 z" fill="#262626"/>
<path d="M12 4 h-4.5 v9.3 q0 .7 .7 .7 h5.1 q.7 0 .7 -.7 v-3.3 z" fill="#262626"/>
<rect x="1" y="9" width="1.3" height="4" fill="#8a8a8a" opacity=".55"/><rect x="8.3" y="9" width="1.3" height="4" fill="#8a8a8a" opacity=".55"/>
<rect x="5.2" y="5" width="3.6" height="1" fill="#8a8a8a" opacity=".7"/>
</g>
<path d="M60 391h5l-2.5 2.5z" fill="#888"/>
<!-- window magnifier -->
<g>
<rect x="41.5" y="404" width="14" height="11" rx="1" fill="url(#gWin)" stroke="#9aa5b3" stroke-width=".7"/>
<rect x="41.8" y="404.3" width="13.4" height="2.4" fill="#2f86d0"/>
<rect x="49.5" y="404.9" width="1.4" height="1.2" fill="#e04040"/><rect x="51.5" y="404.9" width="1.4" height="1.2" fill="#e04040"/><rect x="53.5" y="404.9" width="1.2" height="1.2" fill="#e04040"/>
<circle cx="52.3" cy="412.6" r="3.2" fill="#f4f4f4" stroke="#8d8d8d" stroke-width="1.1"/>
<path d="M50 415 l-3.8 3.8" stroke="#111" stroke-width="1.9"/>
</g>
<!-- person chart 2 (gold) -->
<g transform="translate(41,425.5)"><rect x="9.3" y="1" width="6.7" height="7.4" fill="#f7f7f7" stroke="#cfd3d8" stroke-width=".6"/><path d="M9.8 7 l2.2 -1.6 l1.2 .6 l2.5 -3" fill="none" stroke="#2a9ae0" stroke-width="1.3"/><path d="M0 14 q0 -6 6.25 -6 q6.25 0 6.25 6 q0 1.8 -1.8 1.8 h-8.9 q-1.8 0 -1.8 -1.8z" fill="url(#gSuit2)"/><path d="M5.1 8 h2.4 l-1.2 2.2z" fill="#f0f0f0"/><path d="M5.8 8.8 h1.1 l.4 6.6 h-1.9z" fill="#c8b020"/><circle cx="6.3" cy="4.2" r="4.3" fill="#f2d25a" opacity=".8"/><ellipse cx="6.3" cy="4.6" rx="2.9" ry="3.7" fill="#e3a78c"/></g>
<!-- window green arrow -->
<g transform="translate(41,447)">
<rect x=".5" y=".5" width="14" height="11" fill="url(#gWin)" stroke="#b0b8c4" stroke-width=".7"/>
<rect x=".5" y=".5" width="14" height="2.3" fill="#2f78c8"/>
<rect x="1.5" y="5" width="12" height="1" fill="#4aa8e8"/>
<rect x="1.5" y="7.5" width="12" height=".6" fill="#c8ccd2"/><rect x="4.5" y="3.5" width=".6" height="8" fill="#d4d8dc"/>
<path d="M4 9.5 h6.5 v-3 l5.5 4.6 l-5.5 4.6 v-3 h-6.5z" fill="#3a9a2c"/><path d="M4 9.5 h6.5 v-3 l2.7 2.3 h-9.2z" fill="#58b848" opacity=".8"/></g>
<!-- window red arrow -->
<g transform="translate(41,469)">
<rect x=".5" y=".5" width="14" height="11" fill="url(#gWin)" stroke="#b0b8c4" stroke-width=".7"/>
<rect x=".5" y=".5" width="14" height="2.3" fill="#2f78c8"/>
<rect x="1.5" y="5" width="12" height="1" fill="#4aa8e8"/>
<rect x="1.5" y="7.5" width="12" height=".6" fill="#c8ccd2"/><rect x="4.5" y="3.5" width=".6" height="8" fill="#d4d8dc"/>
<path d="M16 9.5 h-6.5 v-3 l-5.5 4.6 l5.5 4.6 v-3 h6.5z" fill="#e02a18"/><path d="M16 9.5 h-6.5 v-3 l-2.7 2.3 h9.2z" fill="#f05a40" opacity=".8"/></g>
<rect x="39" y="489" width="21" height="1.3" fill="url(#gSepH2)"/>
<!-- lock disabled -->
<g>
<path d="M45.6 499.5 v-2.8 a3.4 3.4 0 0 1 6.8 0 v2.8" fill="none" stroke="#c6ced8" stroke-width="2"/>
<rect x="43.3" y="498.6" width="11.4" height="8.8" rx="1.3" fill="url(#gLockD)"/>
</g>
<rect x="39" y="512" width="21" height="1.3" fill="url(#gSepH2)"/>
<!-- excel -->
<g>
<path d="M43.5 515.3 h8.5 l3.7 3.7 v11 q0 .6 -.6 .6 h-11 q-.6 0 -.6 -.6z" fill="#f0f0f0" stroke="#bdbdbd" stroke-width=".8"/>
<rect x="41" y="517.8" width="9.7" height="10.2" rx=".6" fill="#5aa53c"/>
<rect x="42.4" y="519.4" width="6.9" height="7" fill="#f2f8ee"/>
<path d="M43.6 520.8 l4.5 4.3 M48.1 520.8 l-4.5 4.3" stroke="#3c9a2c" stroke-width="1.5"/>
</g>

<!-- tab icons -->
<g transform="translate(90,363.3)">
<rect x="0" y=".8" width="12.2" height="15" rx="1.6" fill="#c47b2f"/>
<path d="M1.3 3 h9.6 v10.8 q0 .8 -.8 .8 h-6.8 l-2 -2z" fill="#f9f9f9"/>
<path d="M1.3 12.6 l2 2 v-2z" fill="#e0a060"/>
<rect x="3" y="0" width="6.2" height="3" rx="1" fill="#9c9c9c"/><rect x="3" y="2" width="6.2" height="1" fill="#7a7a7a"/>
<path d="M2.8 8.2 l2.6 2.6 l4.6 -5.8" fill="none" stroke="#2a9fe0" stroke-width="2.1"/>
</g>
<g transform="translate(223,363)"><ellipse cx="13" cy="3" rx="3.6" ry="2.4" fill="#e6e6e6" stroke="#7a7a7a" stroke-width=".9"/><path d="M0 14 q0 -6 6.25 -6 q6.25 0 6.25 6 q0 1.8 -1.8 1.8 h-8.9 q-1.8 0 -1.8 -1.8z" fill="url(#gSuit2)"/><path d="M5.1 8 h2.4 l-1.2 2.2z" fill="#f0f0f0"/><path d="M5.8 8.8 h1.1 l.4 6.6 h-1.9z" fill="#2a8ad0"/><ellipse cx="6.3" cy="4.6" rx="2.9" ry="3.7" fill="#e3a78c"/><path d="M3.3 4.4 q-.3 -4.4 3 -4.4 q3.3 0 3 4.4 q-.8 -2.1 -3 -2.1 q-2.2 0 -3 2.1z" fill="#8a5436"/></g>
<g transform="translate(389,363)"><rect x="9.3" y="1" width="6.7" height="7.4" fill="#f7f7f7" stroke="#cfd3d8" stroke-width=".6"/><path d="M9.8 7 l2.2 -1.6 l1.2 .6 l2.5 -3" fill="none" stroke="#2a9ae0" stroke-width="1.3"/><path d="M0 14 q0 -6 6.25 -6 q6.25 0 6.25 6 q0 1.8 -1.8 1.8 h-8.9 q-1.8 0 -1.8 -1.8z" fill="url(#gSuit2)"/><path d="M5.1 8 h2.4 l-1.2 2.2z" fill="#f0f0f0"/><path d="M5.8 8.8 h1.1 l.4 6.6 h-1.9z" fill="#c8b020"/><ellipse cx="6.3" cy="4.6" rx="2.9" ry="3.7" fill="#e3a78c"/><path d="M3.3 4.4 q-.3 -4.4 3 -4.4 q3.3 0 3 4.4 q-.8 -2.1 -3 -2.1 q-2.2 0 -3 2.1z" fill="#8a8a8a"/></g>
<path d="M528 368.5 L534 374.5 M534 368.5 L528 374.5" stroke="#222" stroke-width="1.2"/>
<path d="M557.6 370.2 v5 M555.1 372.7 h5" stroke="#111" stroke-width="1.1"/>
<!-- sort triangle -->
<path d="M281 414.5 h9 l-4.5 4.5z" fill="#6ca4e0"/>

<!-- scrollbar buttons -->
<rect x="71" y="599" width="20" height="17" fill="url(#gSB)" stroke="#8db2e3" stroke-width="1"/>
<rect x="91" y="599" width="900" height="17" fill="url(#gSB)"/>
<rect x="990.5" y="599.5" width="23" height="16" fill="#e6edf7" stroke="#8db2e3" stroke-width="1"/>
<rect x="1014" y="599" width="20" height="17" fill="url(#gSB)" stroke="#8db2e3" stroke-width="1"/>
<path d="M82.5 603.5 l-4 4 l4 4" fill="none" stroke="#1b2b44" stroke-width="2"/>
<path d="M1023.5 603.5 l4 4 l-4 4" fill="none" stroke="#1b2b44" stroke-width="2"/>
<g fill="#3d5f8d"><rect x="534" y="602" width="2" height="10"/><rect x="538" y="602" width="2" height="10"/><rect x="542" y="602" width="2" height="10"/></g>
</svg>

</body></html>
